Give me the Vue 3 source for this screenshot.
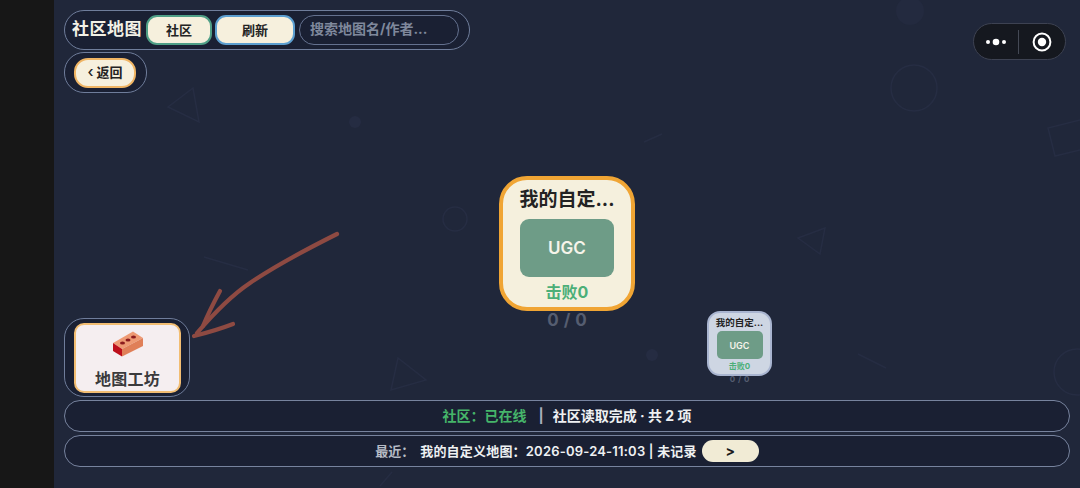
<script setup>
const cards = [
  { cls: 'big', title: '我的自定...', score: '击败0', count: '0 / 0' },
  { cls: 'small', title: '我的自定...', score: '击败0', count: '0 / 0' }
]
</script>

<template>
  <div class="page">
    <div class="rail"></div>
    <main class="main">
      <svg class="deco" width="1026" height="488" viewBox="54 0 1026 488" fill="none" stroke="#262d43" stroke-width="1.5">
        <path d="M168 107 L193 88 L199 122 Z" />
        <circle cx="914" cy="88" r="23" />
        <circle cx="455" cy="219" r="12" />
        <circle cx="355" cy="122" r="6" fill="#252c42" stroke="none" />
        <circle cx="652" cy="355" r="6" fill="#252c42" stroke="none" />
        <circle cx="910" cy="11" r="14" fill="#232a3f" stroke="none" />
        <path d="M1080 120 L1048 128 L1055 156 L1080 150" />
        <path d="M798 238 L825 228 L820 254 Z" />
        <path d="M204 257 L248 270" />
        <path d="M644 142 L662 134" />
        <path d="M858 354 L886 368" />
        <path d="M391 390 L398 358 L426 380 Z" />
        <circle cx="1077" cy="372" r="23" />
        <path d="M380 486 L392 472" />
      </svg>

      <div class="panel toolbar">
        <span class="title">社区地图</span>
        <button class="btn green">社区</button>
        <button class="btn blue">刷新</button>
        <div class="search">搜索地图名/作者...</div>
      </div>

      <div class="capsule">
        <svg width="24" height="10" viewBox="0 0 24 10" fill="#fff">
          <circle cx="4" cy="5" r="2" /><circle cx="12" cy="5" r="3.3" /><circle cx="20" cy="5" r="2" />
        </svg>
        <i class="sep"></i>
        <svg width="20" height="20" viewBox="0 0 20 20">
          <circle cx="10" cy="10" r="8.4" fill="none" stroke="#fff" stroke-width="2" />
          <circle cx="10" cy="10" r="4.2" fill="#fff" />
        </svg>
      </div>

      <div class="panel backwrap">
        <button class="btn back"><b>‹</b> 返回</button>
      </div>

      <div class="spacer"></div>

      <div class="panel workshop">
        <button class="work-btn">
          <svg width="34" height="28" viewBox="0 0 34 28">
            <path d="M2 12 L22 0.5 L32 7 L11 18 Z" fill="#ee9a74" />
            <path d="M2 12 L11 18 L11 25.5 L2 20 Z" fill="#bd0f1b" />
            <path d="M11 18 L32 7 L32 15 L11 25.5 Z" fill="#e07f58" />
            <ellipse cx="11.5" cy="12" rx="2.5" ry="1.6" fill="#8c1b1e" />
            <ellipse cx="17" cy="9" rx="2.5" ry="1.6" fill="#8c1b1e" />
            <ellipse cx="22.5" cy="6" rx="2.5" ry="1.6" fill="#8c1b1e" />
          </svg>
          <span>地图工坊</span>
        </button>
      </div>

      <div class="bar status">
        <span class="online">社区：已在线</span>
        <span class="pipe">|</span>
        <span>社区读取完成 · 共 2 项</span>
      </div>
      <div class="bar recent">
        <span class="muted">最近：</span>
        <span class="recent-text">我的自定义地图：2026-09-24-11:03 | 未记录</span>
        <button class="go">&gt;</button>
      </div>

      <div v-for="c in cards" :key="c.cls" class="node" :class="c.cls">
        <div class="card">
          <div class="name">{{ c.title }}</div>
          <div class="thumb">UGC</div>
          <div class="score">{{ c.score }}</div>
        </div>
        <div class="count">{{ c.count }}</div>
      </div>

      <svg class="arrow" width="160" height="115" viewBox="185 228 160 115" fill="none" stroke="#8e4a42" stroke-linecap="round" stroke-linejoin="round" stroke-width="4.2">
        <path d="M337 234 C 305 250 275 266 250 283 C 232 295 215 312 197 333" />
        <path d="M220 291 C 214 302 208 314 203 326" />
        <path d="M233 324 C 220 329 206 333 194 336" />
      </svg>
    </main>
  </div>
</template>

<style>
html, body { margin: 0; background: #20273a; }
</style>

<style scoped>
.page {
  display: flex;
  width: 1080px;
  height: 488px;
  overflow: hidden;
  font-family: Inter, "Noto Sans CJK SC", sans-serif;
}
.rail { width: 54px; flex: none; background: #171717; }
.main {
  position: relative;
  flex: 1;
  display: flex;
  flex-direction: column;
  padding: 10px 10px 21px;
  box-sizing: border-box;
  background: #20273a;
}
.deco { position: absolute; left: 0; top: 0; }
.panel {
  position: relative;
  box-sizing: border-box;
  background: #1a2033;
  border: 1px solid #6f7d9b;
  border-radius: 20px;
}
.toolbar {
  display: flex;
  align-items: center;
  width: 406px;
  height: 40px;
  padding-left: 7px;
}
.title {
  width: 74px;
  font-size: 17px;
  font-weight: 700;
  letter-spacing: .5px;
  line-height: 28px;
  padding-bottom: 2px;
  color: #f3f1e6;
  white-space: nowrap;
}
.btn {
  box-sizing: border-box;
  height: 30px;
  padding: 0 0 2px;
  background: #f6f0dd;
  border-radius: 11px;
  color: #232323;
  font: 700 13px Inter, "Noto Sans CJK SC", sans-serif;
}
.green { width: 66px; border: 2px solid #4f9f86; }
.blue { width: 80px; margin-left: 3px; border: 2px solid #5c9fd0; }
.search {
  box-sizing: border-box;
  width: 160px;
  height: 30px;
  margin-left: 4px;
  padding-left: 10px;
  border: 1px solid #64718f;
  border-radius: 15px;
  color: #7f889c;
  font-size: 14px;
  font-weight: 700;
  line-height: 26px;
  white-space: nowrap;
}
.capsule {
  position: absolute;
  right: 14px;
  top: 23px;
  display: flex;
  align-items: center;
  box-sizing: border-box;
  width: 93px;
  height: 37px;
  padding-left: 10px;
  background: #15181f;
  border: 1px solid #3d4252;
  border-radius: 19px;
}
.sep { width: 1px; height: 24px; margin: 0 13px 0 10px; background: #444955; }
.backwrap {
  display: flex;
  align-items: center;
  width: 83px;
  height: 41px;
  margin-top: 2px;
  padding-left: 9px;
}
.back {
  width: 62px;
  border: 2px solid #f0b564;
  border-radius: 14px;
  font-size: 13px;
}
.back b { font-size: 15px; font-weight: 500; }
.spacer { flex: 1; }
.workshop {
  display: flex;
  align-items: center;
  width: 126px;
  height: 79px;
  padding-left: 9px;
}
.work-btn {
  box-sizing: border-box;
  display: flex;
  flex-direction: column;
  align-items: center;
  width: 107px;
  height: 70px;
  padding: 6px 0 0;
  background: #f5eef0;
  border: 2px solid #f2bd72;
  border-radius: 10px;
  color: #3a3a3c;
  font: 700 16px/20px Inter, "Noto Sans CJK SC", sans-serif;
}
.work-btn span { margin-top: 10px; letter-spacing: .3px; }
.bar {
  position: relative;
  display: flex;
  align-items: center;
  justify-content: center;
  box-sizing: border-box;
  padding-bottom: 2px;
  background: #1a2033;
  border: 1px solid #77839e;
  border-radius: 16px;
  color: #eef0f2;
  font-size: 14px;
  font-weight: 700;
  white-space: nowrap;
}
.status { height: 32px; margin-top: 3px; }
.recent { height: 32px; margin-top: 3px; font-size: 13px; font-weight: 600; }
.recent-text { letter-spacing: .2px; }
.online { color: #46b56a; }
.pipe { margin: 0 9px 0 12px; color: #aab0bc; }
.muted { margin-right: 6px; color: #b7bcc6; }
.go {
  box-sizing: border-box;
  width: 57px;
  height: 22px;
  margin: 2px 0 0 5px;
  padding: 0;
  background: #f1ebd5;
  border: none;
  border-radius: 11px;
  color: #1c1c1c;
  font: 700 14px/22px Inter, sans-serif;
}
.node { position: absolute; display: flex; flex-direction: column; align-items: center; }
.big { left: 445px; top: 176px; width: 136px; }
.small { left: 653px; top: 311px; width: 65px; }
.card {
  box-sizing: border-box;
  display: flex;
  flex-direction: column;
  align-items: center;
  width: 100%;
  background: #f5f0dd;
}
.big .card { height: 135px; border: 4px solid #f0a534; border-radius: 28px; padding-top: 7px; }
.small .card { height: 65px; border: 2px solid #a9b5d0; border-radius: 13px; padding-top: 3px; background: #ced6e3; }
.name { color: #232323; font-weight: 700; white-space: nowrap; }
.big .name { font-size: 19px; line-height: 26px; }
.small .name { font-size: 9.5px; line-height: 13px; }
.thumb {
  display: flex;
  align-items: center;
  justify-content: center;
  background: #6e9c87;
  color: #f6f4ea;
  font-weight: 600;
}
.big .thumb { width: 94px; height: 58px; margin-top: 6px; border-radius: 9px; font-size: 17px; }
.small .thumb { width: 46px; height: 28px; margin-top: 2px; border-radius: 5px; font-size: 9px; }
.score { color: #4caf78; font-weight: 700; white-space: nowrap; }
.big .score { margin-top: 3px; font-size: 16px; line-height: 24px; }
.small .score { margin-top: 1px; font-size: 8px; line-height: 12px; }
.count { color: #555d70; font-weight: 700; word-spacing: 1px; }
.big .count { font-size: 17px; line-height: 18px; }
.small .count { font-size: 8px; line-height: 8px; margin-top: -1px; }
.arrow { position: absolute; left: 131px; top: 228px; }
</style>
